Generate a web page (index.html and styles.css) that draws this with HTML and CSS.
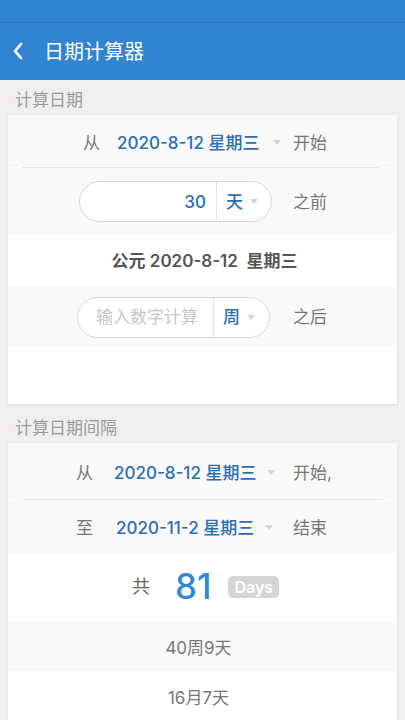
FILE: index.html
```html
<!DOCTYPE html>
<html lang="zh-CN">
<head>
<meta charset="utf-8">
<title>日期计算器</title>
<link rel="stylesheet" href="styles.css">
</head>
<body>
<div class="statusbar"></div>
<header class="appbar">
  <svg class="back" width="12" height="18" viewBox="0 0 12 18"><path d="M9 2 L3 9 L9 16" fill="none" stroke="#fff" stroke-width="2.6" stroke-linecap="round" stroke-linejoin="round"/></svg>
  <h1 class="title">日期计算器</h1>
</header>

<div class="section-label">计算日期</div>
<section class="card card-first">
  <div class="row row-from">
    <span class="lead">从</span>
    <span class="date">2020-8-12&nbsp;星期三</span>
    <span class="caret caret-wide"></span>
    <span class="tail">开始</span>
  </div>
  <div class="divider"></div>
  <div class="row row-pill">
    <div class="pill pill-a">
      <span class="pill-input value">30</span>
      <span class="pill-select">天<span class="caret caret-pill"></span></span>
    </div>
    <span class="tail">之前</span>
  </div>
  <div class="row row-result">公元 2020-8-12&nbsp;&nbsp;星期三</div>
  <div class="row row-pill2">
    <div class="pill pill-b">
      <span class="pill-input placeholder">输入数字计算</span>
      <span class="pill-select">周<span class="caret caret-pill"></span></span>
    </div>
    <span class="tail">之后</span>
  </div>
  <div class="blank"></div>
</section>

<div class="section-label">计算日期间隔</div>
<section class="card">
  <div class="row row-from2">
    <span class="lead lead2">从</span>
    <span class="date">2020-8-12&nbsp;星期三</span>
    <span class="caret caret-narrow"></span>
    <span class="tail">开始,</span>
  </div>
  <div class="divider"></div>
  <div class="row row-to">
    <span class="lead lead2">至</span>
    <span class="date date-to">2020-11-2&nbsp;星期三</span>
    <span class="caret caret-narrow"></span>
    <span class="tail">结束</span>
  </div>
  <div class="row total">
    <span class="total-lead">共</span>
    <span class="total-num">81</span>
    <span class="badge">Days</span>
  </div>
  <div class="row sub sub-grey">40周9天</div>
  <div class="row sub">16月7天</div>
</section>
</body>
</html>
```

FILE: styles.css
```css
* { box-sizing: border-box; }
html, body { margin: 0; padding: 0; }
body {
  width: 405px;
  height: 720px;
  overflow: hidden;
  background: #f0efee;
  font-family: "Inter", "Noto Sans CJK SC", sans-serif;
  color: #777;
}
.statusbar {
  height: 23px;
  background: #3083d1;
  border-bottom: 1px solid #2b78c2;
}
.appbar {
  height: 57px;
  background: #3084d2;
  display: flex;
  align-items: center;
  padding-left: 12px;
}
.back { display: block; margin-top: -1px; }
.title {
  margin: 0 0 0 20px;
  font-size: 20px;
  font-weight: 400;
  color: #fff;
  line-height: 24px;
}
.section-label {
  padding: 8px 15px 3px;
  font-size: 17px;
  line-height: 24px;
  color: #9a9a9a;
}
.card {
  margin: 0 8px;
  background: #fff;
  box-shadow: 0 1px 3px rgba(0,0,0,0.08);
  overflow: hidden;
}
.card-first { margin-bottom: 4px; }
.row {
  display: flex;
  align-items: center;
  font-size: 17px;
  line-height: 24px;
  background: #f9f9f9;
}
.divider {
  height: 1px;
  background: #e8e8e8;
  margin: 0 14px 0 15px;
}
.card-first .divider { margin: 0 17px 0 14px; }
.lead { color: #777; margin-right: 17px; }
.lead2 { margin-right: 21px; }
.date { color: #2b6fb4; font-weight: 500; white-space: nowrap; }
.caret {
  display: inline-block;
  width: 0; height: 0;
  border-left: 4px solid transparent;
  border-right: 4px solid transparent;
  border-top: 5px solid #d4d4d4;
}
.caret-wide { margin-left: 14px; }
.caret-narrow { margin-left: 11px; }
.tail { margin-left: auto; width: 60px; color: #777; }
.row-from { height: 52px; padding: 3px 44px 0 75px; }
.row-pill { height: 67px; padding: 0 44px 0 71px; }
.row-pill2 { height: 60px; padding: 0 44px 0 69px; }
.row-result {
  height: 52px;
  background: #fff;
  justify-content: center;
  color: #555;
  font-weight: 600;
  padding-left: 4px;
}
.blank { height: 57px; background: #fff; }
.pill {
  width: 193px;
  height: 41px;
  border: 1px solid #d6d6d6;
  border-radius: 21px;
  background: #fff;
  display: flex;
  align-items: stretch;
}
.pill-input {
  display: flex;
  align-items: center;
  border-right: 1px solid #e4e4e4;
}
.pill-a .pill-input { width: 137px; justify-content: flex-end; padding-right: 10px; }
.pill-b .pill-input { width: 136px; padding-left: 18px; }
.value { color: #2b6fb4; font-weight: 500; }
.placeholder { color: #c6c6c6; }
.pill-select {
  flex: 1;
  display: flex;
  align-items: center;
  padding-left: 9px;
  color: #2b6fb4;
  font-weight: 500;
}
.caret-pill { margin-left: 7px; }
.row-from2 { height: 56px; padding: 3px 44px 0 68px; }
.row-to { height: 53px; padding: 2px 44px 0 68px; }
.date-to { margin-left: 2px; }
.total {
  height: 68px;
  background: #fff;
  justify-content: center;
  padding-left: 6px;
}
.total-lead { color: #666; font-size: 18px; margin-right: 25px; }
.total-num {
  font-size: 35px;
  line-height: 40px;
  color: #2f8ad6;
  font-weight: 500;
  margin-right: 17px;
  margin-top: -2px;
}
.badge {
  background: #d5d5d5;
  color: #fff;
  font-size: 16px;
  line-height: 22px;
  padding: 0 6px;
  border-radius: 5px;
  font-weight: 600;
}
.sub {
  height: 50px;
  background: #fff;
  justify-content: center;
  color: #777;
  padding: 3px 8px 0 0;
}
.sub-grey { background: #f9f9f9; }
```
